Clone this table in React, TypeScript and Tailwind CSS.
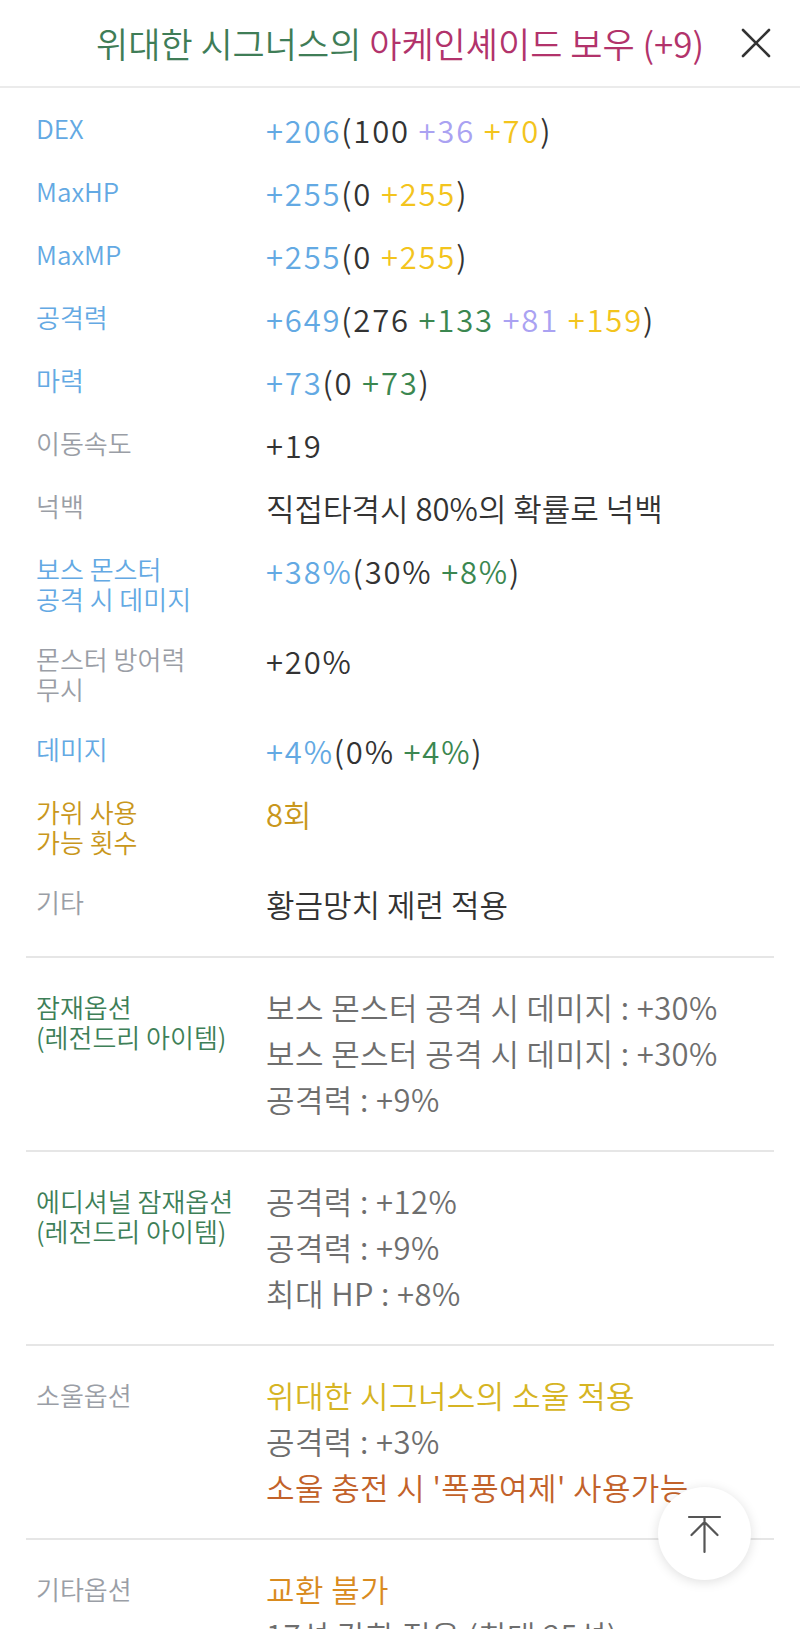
import React from "react";

type Seg = { t: string; c: string; n?: boolean };

const B = "text-[#63a9e3]";
const D = "text-[#333333]";
const P = "text-[#aaa2f2]";
const Y = "text-[#f3c41d]";
const G = "text-[#3b8750]";
const GOLD = "text-[#c9971c]";

const LBLUE = "text-[#63a9e3]";
const LGRAY = "text-[#9a9ea6]";

type Row = { label: string[]; lc: string; value: Seg[] };

const rows: Row[] = [
  { label: ["DEX"], lc: LBLUE, value: [{ t: "+206", c: B, n: true }, { t: "(100", c: D, n: true }, { t: " +36", c: P, n: true }, { t: " +70", c: Y, n: true }, { t: ")", c: D, n: true }] },
  { label: ["MaxHP"], lc: LBLUE, value: [{ t: "+255", c: B, n: true }, { t: "(0", c: D, n: true }, { t: " +255", c: Y, n: true }, { t: ")", c: D, n: true }] },
  { label: ["MaxMP"], lc: LBLUE, value: [{ t: "+255", c: B, n: true }, { t: "(0", c: D, n: true }, { t: " +255", c: Y, n: true }, { t: ")", c: D, n: true }] },
  { label: ["공격력"], lc: LBLUE, value: [{ t: "+649", c: B, n: true }, { t: "(276", c: D, n: true }, { t: " +133", c: G, n: true }, { t: " +81", c: P, n: true }, { t: " +159", c: Y, n: true }, { t: ")", c: D, n: true }] },
  { label: ["마력"], lc: LBLUE, value: [{ t: "+73", c: B, n: true }, { t: "(0", c: D, n: true }, { t: " +73", c: G, n: true }, { t: ")", c: D, n: true }] },
  { label: ["이동속도"], lc: LGRAY, value: [{ t: "+19", c: D, n: true }] },
  { label: ["넉백"], lc: LGRAY, value: [{ t: "직접타격시 80%의 확률로 넉백", c: D }] },
  { label: ["보스 몬스터", "공격 시 데미지"], lc: LBLUE, value: [{ t: "+38%", c: B, n: true }, { t: "(30%", c: D, n: true }, { t: " +8%", c: G, n: true }, { t: ")", c: D, n: true }] },
  { label: ["몬스터 방어력", "무시"], lc: LGRAY, value: [{ t: "+20%", c: D, n: true }] },
  { label: ["데미지"], lc: LBLUE, value: [{ t: "+4%", c: B, n: true }, { t: "(0%", c: D, n: true }, { t: " +4%", c: G, n: true }, { t: ")", c: D, n: true }] },
  { label: ["가위 사용", "가능 횟수"], lc: "text-[#c9971c]", value: [{ t: "8회", c: GOLD }] },
  { label: ["기타"], lc: LGRAY, value: [{ t: "황금망치 제련 적용", c: D }] },
];

type Section = { label: string[]; lc: string; lines: Seg[] };

const PG = "text-[#6e6e6e]";
const LGREEN = "text-[#3e7f58]";

const sections: Section[] = [
  {
    label: ["잠재옵션", "(레전드리 아이템)"],
    lc: LGREEN,
    lines: [
      { t: "보스 몬스터 공격 시 데미지 : +30%", c: PG },
      { t: "보스 몬스터 공격 시 데미지 : +30%", c: PG },
      { t: "공격력 : +9%", c: PG },
    ],
  },
  {
    label: ["에디셔널 잠재옵션", "(레전드리 아이템)"],
    lc: LGREEN,
    lines: [
      { t: "공격력 : +12%", c: PG },
      { t: "공격력 : +9%", c: PG },
      { t: "최대 HP : +8%", c: PG },
    ],
  },
  {
    label: ["소울옵션"],
    lc: LGRAY,
    lines: [
      { t: "위대한 시그너스의 소울 적용", c: "text-[#d6b423]" },
      { t: "공격력 : +3%", c: PG },
      { t: "소울 충전 시 '폭풍여제' 사용가능", c: "text-[#c2622a]" },
    ],
  },
  {
    label: ["기타옵션"],
    lc: LGRAY,
    lines: [
      { t: "교환 불가", c: "text-[#d98b1f]" },
      { t: "17성 강화 적용 (최대 25성)", c: PG },
    ],
  },
];

export default function App() {
  return (
    <div className="relative h-[1629px] w-[800px] overflow-hidden bg-white font-['Noto_Sans_CJK_KR_DemiLight','Noto_Sans_CJK_KR','Noto_Sans',sans-serif] font-light">
      {/* Header */}
      <div className="grid h-[88px] grid-cols-[1fr_auto_1fr] items-center border-b-2 border-[#ebebeb]">
        <div />
        <div className="text-[35px] leading-[44px] whitespace-nowrap">
          <span className="text-[#3f7d57]">위대한 시그너스의 </span>
          <span className="text-[#b2336b]">아케인셰이드 보우 (+9)</span>
        </div>
        <div className="flex justify-end pr-[28px]">
          <svg width="32" height="32" viewBox="0 0 32 32" fill="none">
            <path d="M3 3 L29 29 M29 3 L3 29" stroke="#333333" strokeWidth="2.6" strokeLinecap="round" />
          </svg>
        </div>
      </div>

      {/* Stats */}
      <div className="px-[26px] pt-[10px] pb-[21px]">
        {rows.map((r, i) => (
          <div key={i} className="flex items-start px-[10px] py-[15px]">
            <div className={`w-[230px] shrink-0 text-[26px] leading-[30px] ${r.lc}`}>
              {r.label.map((l, j) => (
                <div key={j} className="whitespace-nowrap">{l}</div>
              ))}
            </div>
            <div className="text-[31px] leading-[33px] whitespace-nowrap">
              {r.value.map((s, j) => (
                <span key={j} className={`${s.c} ${s.n ? "tracking-[1.8px]" : ""}`}>
                  {s.t}
                </span>
              ))}
            </div>
          </div>
        ))}
      </div>

      {/* Option sections */}
      <div className="px-[26px]">
        {sections.map((s, i) => (
          <div key={i} className="border-t-2 border-[#e6e6e6] px-[10px] pt-[26px] pb-[28px]">
            <div className="flex items-start">
              <div className={`mt-[8px] w-[230px] shrink-0 text-[26px] leading-[30px] ${s.lc}`}>
                {s.label.map((l, j) => (
                  <div key={j} className="whitespace-nowrap">{l}</div>
                ))}
              </div>
              <div className="text-[31px] leading-[46px]">
                {s.lines.map((l, j) => (
                  <div key={j} className={`whitespace-nowrap tracking-[0.4px] ${l.c}`}>
                    {l.t}
                  </div>
                ))}
              </div>
            </div>
          </div>
        ))}
      </div>

      {/* Scroll to top button */}
      <button className="absolute right-[49px] bottom-[49px] flex h-[93px] w-[93px] items-center justify-center rounded-full bg-white shadow-[0_2px_12px_rgba(0,0,0,0.13)]">
        <svg width="93" height="93" viewBox="0 0 93 93" fill="none">
          <path d="M31 30 H62 M46.5 31 V65 M33.5 48 L46.5 35 L59.5 48" stroke="#555555" strokeWidth="2.2" strokeLinecap="round" strokeLinejoin="round" />
        </svg>
      </button>
    </div>
  );
}
